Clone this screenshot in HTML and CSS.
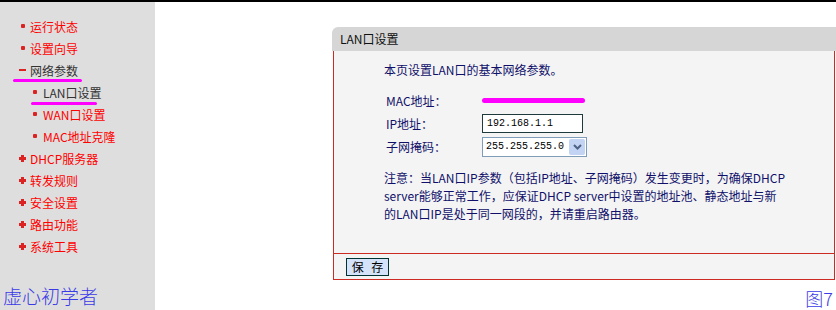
FILE: index.html
```html
<!DOCTYPE html>
<html lang="zh-CN">
<head>
    <meta charset="UTF-8">
    <title>LAN口设置</title>
    <link rel="stylesheet" href="styles.css">
</head>
<body>
    <div class="sidebar">
        <ul class="menu">
            <li class="item"><span class="dot"></span>运行状态</li>
            <li class="item"><span class="dot"></span>设置向导</li>
            <li class="item open mark-net"><span class="minus"></span>网络参数</li>
            <li class="item sub current mark-lan"><span class="dot"></span>LAN口设置</li>
            <li class="item sub"><span class="dot"></span>WAN口设置</li>
            <li class="item sub"><span class="dot"></span>MAC地址克隆</li>
            <li class="item"><span class="plus"></span>DHCP服务器</li>
            <li class="item"><span class="plus"></span>转发规则</li>
            <li class="item"><span class="plus"></span>安全设置</li>
            <li class="item"><span class="plus"></span>路由功能</li>
            <li class="item"><span class="plus"></span>系统工具</li>
        </ul>
        <div class="signature">虚心初学者</div>
    </div>

    <div class="main">
        <div class="panel">
            <div class="panel-title">LAN口设置</div>
            <div class="panel-body">
                <p class="intro">本页设置LAN口的基本网络参数。</p>
                <div class="form">
                    <div class="row">
                        <span class="label">MAC地址：</span>
                        <span class="redact"></span>
                    </div>
                    <div class="row">
                        <span class="label">IP地址：</span>
                        <span class="input">192.168.1.1</span>
                    </div>
                    <div class="row">
                        <span class="label">子网掩码：</span>
                        <span class="select">
                            <span class="select-value">255.255.255.0</span>
                            <span class="select-arrow">
                                <svg width="9" height="6" viewBox="0 0 9 6"><path d="M1 1 L4.5 4.5 L8 1" fill="none" stroke="#4d6185" stroke-width="2"/></svg>
                            </span>
                        </span>
                    </div>
                </div>
                <p class="note">注意：当LAN口IP参数（包括IP地址、子网掩码）发生变更时，为确保DHCP<br>server能够正常工作，应保证DHCP server中设置的地址池、静态地址与新<br>的LAN口IP是处于同一网段的，并请重启路由器。</p>
            </div>
            <div class="panel-footer">
                <button class="btn">保 存</button>
            </div>
        </div>
        <div class="caption">图7</div>
    </div>
</body>
</html>
```

FILE: styles.css
```css
body {
    margin: 0;
    border-top: 2px solid #000;
    height: 308px;
    display: flex;
    background: #fff;
    font-family: "Noto Sans CJK SC", sans-serif;
    font-size: 12px;
    overflow: hidden;
}
.sidebar {
    width: 155px;
    background: #dedede;
    display: flex;
    flex-direction: column;
}
.menu {
    list-style: none;
    margin: 0;
    padding: 14px 0 0 0;
}
.item {
    position: relative;
    height: 22px;
    line-height: 22px;
    padding-left: 30px;
    color: #ff0000;
    white-space: nowrap;
}
.item.sub {
    padding-left: 43px;
}
.item.open,
.item.current {
    color: #333;
}
.dot,
.minus,
.plus {
    position: absolute;
    top: 50%;
}
.dot {
    left: 21px;
    width: 4px;
    height: 4px;
    margin-top: -3px;
    border-radius: 1px;
    background: #dd2222;
}
.sub .dot {
    left: 33px;
}
.minus {
    left: 19px;
    width: 7px;
    height: 2px;
    margin-top: -2px;
    background: #dd2222;
}
.plus {
    left: 19px;
    width: 7px;
    height: 7px;
    margin-top: -4px;
}
.plus::before,
.plus::after {
    content: "";
    position: absolute;
    background: #dd2222;
}
.plus::before {
    left: 0;
    top: 2px;
    width: 7px;
    height: 3px;
}
.plus::after {
    left: 2px;
    top: 0;
    width: 3px;
    height: 7px;
}
/* hand-drawn highlight strokes */
.mark-net::after,
.mark-lan::after {
    content: "";
    position: absolute;
    height: 3px;
    border-radius: 2px;
    background: #ff00ff;
}
.mark-net::after {
    left: 13px;
    width: 69px;
    top: 19px;
}
.mark-lan::after {
    left: 31px;
    width: 66px;
    top: 20px;
}
.signature {
    margin-top: auto;
    padding: 0 0 2px 3px;
    line-height: 24px;
    font-size: 19px;
    font-weight: 300;
    color: #3b3be6;
}
.main {
    flex: 1;
    padding: 25px 0 0 177px;
}
.panel {
    width: 504px;
}
.panel-title {
    height: 24px;
    line-height: 24px;
    padding-left: 8px;
    background: #d6d6d6;
    border-top-left-radius: 6px;
    color: #111;
}
.panel-body {
    margin: 0 1px;
    height: 202px;
    box-sizing: border-box;
    padding: 10px 0 0 50px;
    background: #f4f4f4;
    border-left: 1px solid #cc2a22;
    border-right: 1px solid #cc2a22;
    color: #10106a;
}
.intro {
    margin: 0;
    line-height: 18px;
}
.form {
    margin: 10px 0 0 2px;
}
.row {
    display: flex;
    align-items: center;
    height: 23px;
}
.label {
    width: 96px;
}
.redact {
    width: 103px;
    height: 5px;
    border-radius: 3px;
    background: #ff00ff;
}
.input {
    height: 17px;
    line-height: 17px;
    padding-left: 4px;
    width: 95px;
    background: #fff;
    border: 1px solid #1e3a3a;
    color: #000;
    font-family: "Liberation Mono", monospace;
    font-size: 10px;
}
.select {
    display: flex;
    width: 103px;
    height: 18px;
    background: #fff;
    border: 1px solid #7f9db9;
    color: #000;
}
.select-value {
    flex: 1;
    padding-left: 3px;
    line-height: 18px;
    font-family: "Liberation Mono", monospace;
    font-size: 10px;
}
.select-arrow {
    width: 16px;
    margin: 1px;
    display: flex;
    align-items: center;
    justify-content: center;
    background: #c3d3f4;
    border-radius: 2px;
}
.note {
    margin: 11px 0 0 0;
    line-height: 18px;
    white-space: nowrap;
}
.panel-footer {
    margin: 0 1px;
    height: 25px;
    padding-left: 12px;
    display: flex;
    align-items: center;
    background: #f4f4f4;
    border: 1px solid #cc2a22;
}
.btn {
    height: 18px;
    width: 43px;
    padding: 0;
    background: #d4e3fa;
    border: 1px solid #003333;
    font-family: "Noto Sans CJK SC", sans-serif;
    font-size: 12px;
    line-height: 14px;
    word-spacing: 5px;
    color: #000;
}
.caption {
    width: 501px;
    margin-top: 7px;
    text-align: right;
    font-size: 18px;
    font-weight: 300;
    line-height: 22px;
    color: #3b3be6;
}
```
